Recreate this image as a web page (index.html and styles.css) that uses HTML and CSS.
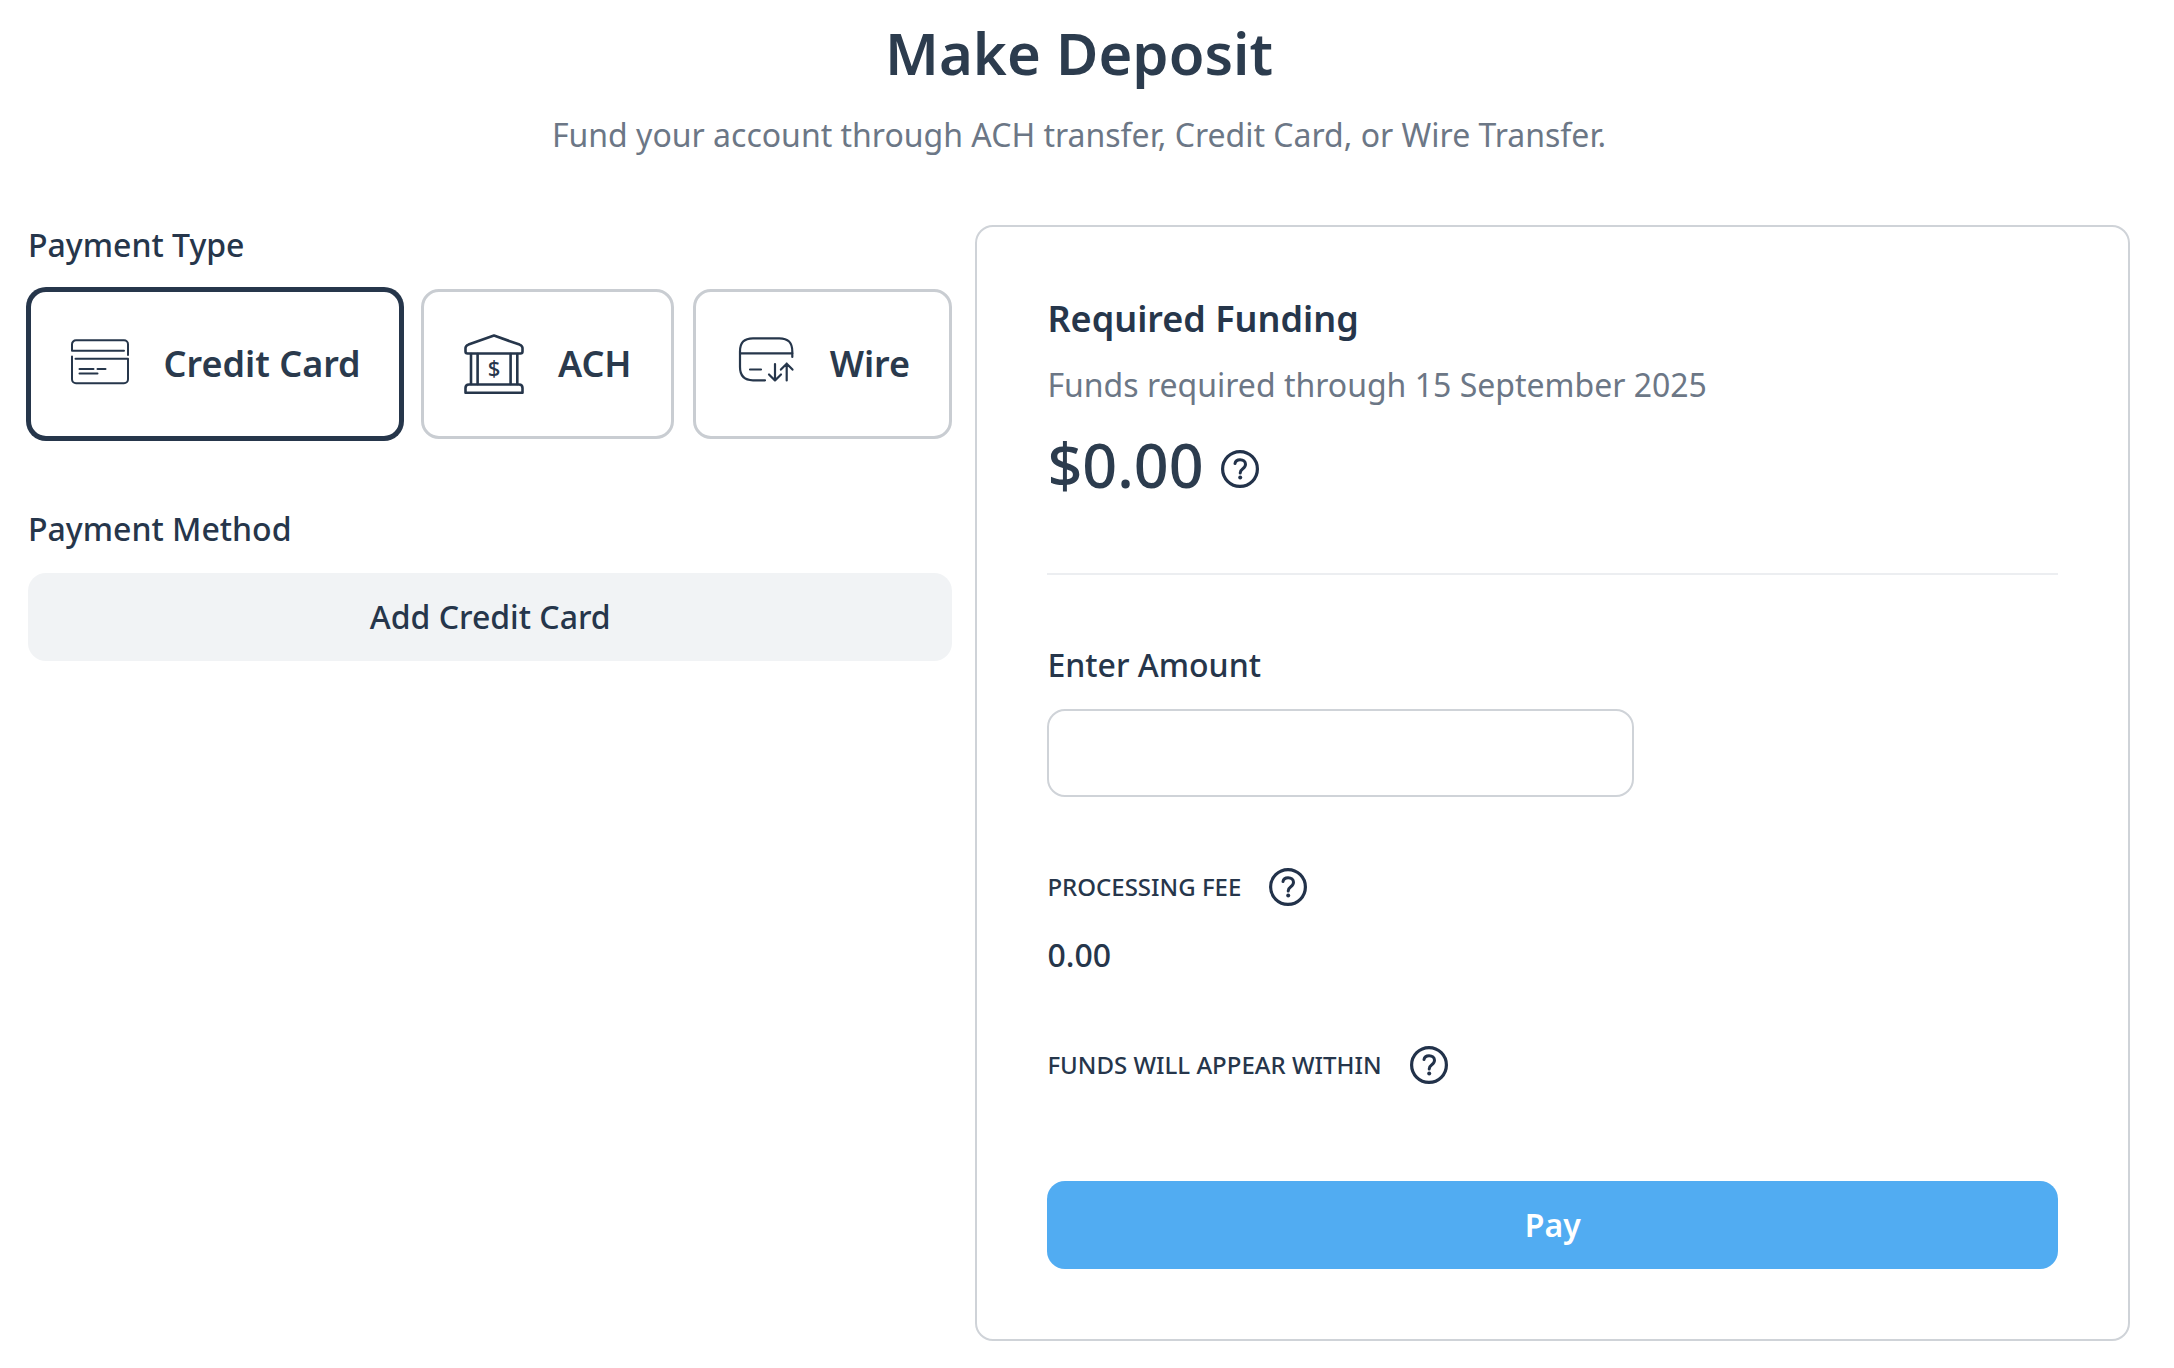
FILE: index.html
```html
<!DOCTYPE html>
<html lang="en">
<head>
    <meta charset="UTF-8">
    <meta name="viewport" content="width=device-width, initial-scale=1.0">
    <title>Make Deposit</title>
    <link rel="stylesheet" href="styles.css">
</head>
<body>
    <svg class="sprite" aria-hidden="true">
        <symbol id="icon-help" viewBox="0 0 38 38">
            <circle cx="19" cy="19" r="17.4" fill="none" stroke="currentColor" stroke-width="3.2"/>
            <path d="M14 13.6c.4-2.4 2.3-3.8 5.1-3.8 3.1 0 5.4 1.700 5.4 4.500 0 2-1 3.200-2.700 4.400-1.700 1.200-2.600 2.100-2.600 4.300" fill="none" stroke="currentColor" stroke-width="3" stroke-linecap="round"/>
            <circle cx="19.2" cy="27.6" r="2" fill="currentColor"/>
        </symbol>
    </svg>

    <header class="page-header">
        <h1>Make Deposit</h1>
        <p>Fund your account through ACH transfer, Credit Card, or Wire Transfer.</p>
    </header>

    <main class="deposit">
        <div class="payment">
            <h2 class="label" id="type-label">Payment Type</h2>
            <div class="types" role="group" aria-labelledby="type-label">
                <button type="button" class="type selected" aria-pressed="true">
                    <svg class="type-icon" viewBox="0 0 60 60" stroke-width="2">
                        <path d="M58 21V10.300a4 4 0 0 0-4-4H6a4 4 0 0 0-4 4v6.400h52"/>
                        <path d="M2 22.500v22.800a4 4 0 0 0 4 4h48a4 4 0 0 0 4-4V24.700H5.500"/>
                        <path d="M9.500 35h14M27.500 35h8M9.500 39.500h18"/>
                    </svg>
                    Credit Card
                </button>
                <button type="button" class="type" aria-pressed="false">
                    <svg class="type-icon" viewBox="0 0 60 60" stroke-width="2.6">
                        <path d="M30 1.600L55.500 10.600Q58.500 11.800 58.500 14V17.500Q58.500 19.500 56.500 19.500H3.500Q1.500 19.500 1.500 17.500V14Q1.500 11.800 4.500 10.600Z"/>
                        <path d="M1.500 58.700V54Q1.500 50.500 5 50.500H55Q58.500 50.500 58.500 54V58.700Z"/>
                        <path d="M7 20v30M13.600 20v30M46.600 20v30M53.300 20v30"/>
                        <text class="dollar" x="30" y="42" text-anchor="middle">$</text>
                    </svg>
                    ACH
                </button>
                <button type="button" class="type" aria-pressed="false">
                    <svg class="type-icon" viewBox="0 0 60 60" stroke-width="2.2">
                        <path d="M56.300 23v-5.500c0-9-4-13.200-13-13.200H17c-9 0-13 4.200-13 13.200v15.600c0 9 4 13.200 13 13.200h12"/>
                        <path d="M4 19.300h52.300M14 35.500h11"/>
                        <path d="M39 30v16.500M33 40.500l6 6 6-6M50.700 46.500V29.700M44.900 35.600l5.800-5.900 5.800 5.900"/>
                    </svg>
                    Wire
                </button>
            </div>

            <h2 class="label">Payment Method</h2>
            <button type="button" class="button button-light">Add Credit Card</button>
        </div>

        <form class="summary">
            <h2 class="summary-title">Required Funding</h2>
            <p class="summary-note">Funds required through 15 September 2025</p>
            <div class="total">
                <span class="total-value">$0.00</span>
                <button type="button" class="help" aria-label="About required funding"><svg><use href="#icon-help"/></svg></button>
            </div>

            <hr>

            <label class="label" for="amount">Enter Amount</label>
            <input type="text" id="amount" class="amount" inputmode="decimal">

            <div class="detail">
                <span>PROCESSING FEE</span>
                <button type="button" class="help" aria-label="About the processing fee"><svg><use href="#icon-help"/></svg></button>
            </div>
            <p class="fee">0.00</p>

            <div class="detail">
                <span>FUNDS WILL APPEAR WITHIN</span>
                <button type="button" class="help" aria-label="About funding time"><svg><use href="#icon-help"/></svg></button>
            </div>

            <button type="submit" class="button button-primary">Pay</button>
        </form>
    </main>
</body>
</html>
```
FILE: styles.css
```css
* {
    box-sizing: border-box;
}
body {
    margin: 0;
    padding: 17px 44px 24px 28px;
    background-color: #fff;
    color: #26364b;
    font-family: "Noto Sans", sans-serif;
    font-size: 32px;
    font-weight: 500;
    line-height: 40px;
}
h1, h2, p {
    margin: 0;
}
button, input {
    font: inherit;
    color: inherit;
}
button {
    cursor: pointer;
}
.sprite {
    display: none;
}

/* Header */
.page-header {
    margin-bottom: 70px;
    text-align: center;
}
.page-header h1 {
    color: #2c3c4e;
    font-size: 58px;
    font-weight: 600;
    line-height: 72px;
}
.page-header p {
    margin-top: 26px;
    color: #6c7786;
    font-weight: 400;
}

/* Two columns */
.deposit {
    display: grid;
    grid-template-columns: 924fr 1154fr;
    gap: 23px;
    align-items: start;
}
.label {
    display: block;
    margin-bottom: 24px;
    font-size: 32px;
    font-weight: 500;
}

/* Payment type */
.types {
    display: grid;
    grid-template-columns: 374fr 253fr 259fr;
    gap: 19px;
    margin-bottom: 70px;
}
.type {
    display: flex;
    align-items: center;
    justify-content: center;
    gap: 34px;
    height: 150px;
    padding: 0;
    border: 3px solid #c9cdd2;
    border-radius: 18px;
    background-color: #fff;
    color: #2a3a4d;
    font-size: 36px;
    font-weight: 600;
    white-space: nowrap;
}
.type.selected {
    border-color: #26364b;
    box-shadow: 0 0 0 2px #26364b;
}
.type-icon {
    flex: none;
    width: 60px;
    height: 60px;
    fill: none;
    stroke: #26364b;
    stroke-linecap: round;
    stroke-linejoin: round;
}
.dollar {
    fill: #26364b;
    stroke: none;
    font-size: 22px;
    font-weight: 500;
}

/* Buttons */
.button {
    display: block;
    width: 100%;
    height: 88px;
    border: none;
    border-radius: 18px;
}
.button-light {
    background-color: #f1f3f5;
}
.button-primary {
    margin-top: 96px;
    background-color: #51acf2;
    color: #fff;
    font-weight: 600;
}

/* Summary card */
.summary {
    padding: 70px;
    border: 2px solid #cfd3d8;
    border-radius: 18px;
}
.summary-title {
    font-size: 36px;
    font-weight: 600;
    line-height: 44px;
}
.summary-note {
    margin: 24px 0;
    color: #6c7786;
    font-weight: 400;
}
.total {
    display: flex;
    align-items: baseline;
    gap: 17px;
    color: #2c3c4e;
}
.total-value {
    font-size: 61px;
    line-height: 72px;
}
.help {
    flex: none;
    padding: 0;
    border: none;
    background: none;
    color: #22324a;
}
.help svg {
    display: block;
    width: 38px;
    height: 38px;
}
hr {
    height: 2px;
    margin: 72px 0 70px;
    border: none;
    background-color: #eceef1;
}
.amount {
    display: block;
    width: 58%;
    height: 88px;
    margin-bottom: 70px;
    padding: 0 24px;
    border: 2px solid #cfd3d8;
    border-radius: 18px;
    background-color: #fff;
}
.detail {
    display: flex;
    align-items: center;
    gap: 28px;
    height: 40px;
    font-size: 24px;
}
.fee {
    margin: 28px 0 70px;
}
```
